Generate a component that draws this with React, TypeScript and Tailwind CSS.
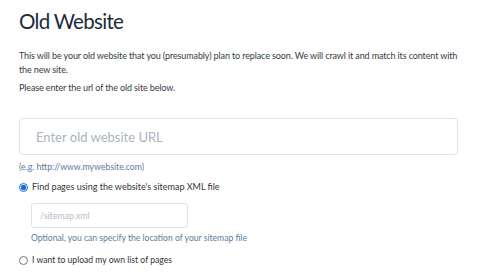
import React, { useState } from 'react';

const App: React.FC = () => {
  const [mode, setMode] = useState<'sitemap' | 'upload'>('sitemap');

  return (
    <div className="min-h-[280px] w-[480px] bg-white font-['Lato','Liberation_Sans',sans-serif] text-[#363b42]">
      <div className="pl-[19px] pr-[22px] pt-[7px]">
        <h1 className="text-[20.5px] font-normal leading-[28px] tracking-[-0.7px] text-[#1c2b3a]">Old Website</h1>

        <p className="mt-[14px] text-[9px] leading-[14px] tracking-[-0.12px]">
          This will be your old website that you (presumably) plan to replace soon. We will crawl it and match its content with the new site.
        </p>
        <p className="mt-[4px] text-[9px] leading-[14px] tracking-[-0.12px]">Please enter the url of the old site below.</p>

        <input
          type="text"
          placeholder="Enter old website URL"
          className="mt-[23px] block h-[37px] w-full rounded-[4px] border border-[#dbe3ec] px-[16px] text-[13px] text-[#333] outline-none placeholder:text-[#aab4bf]"
        />
        <div className="mt-[6px] text-[8.7px] leading-[12px] text-[#5b7d9c]">(e.g. http://www.mywebsite.com)</div>

        <label className="mt-[8px] flex items-center gap-[4px] text-[9px] leading-[12px] text-[#333]">
          <input
            type="radio"
            name="mode"
            checked={mode === 'sitemap'}
            onChange={() => setMode('sitemap')}
            className="m-0 h-[9px] w-[9px] accent-[#1a6fd6]"
          />
          Find pages using the website's sitemap XML file
        </label>

        <div className="pl-[12px]">
          <input
            type="text"
            placeholder="/sitemap.xml"
            className="mt-[10px] block h-[25px] w-[157px] rounded-[3px] border border-[#dbe3ec] px-[8px] text-[8.8px] text-[#333] outline-none placeholder:text-[#b5bec8]"
          />
          <div className="mt-[4px] text-[8.6px] leading-[12px] text-[#5b7d9c]">
            Optional, you can specify the location of your sitemap file
          </div>
        </div>

        <label className="mt-[10px] flex items-center gap-[4px] text-[8.6px] leading-[12px] text-[#333]">
          <input
            type="radio"
            name="mode"
            checked={mode === 'upload'}
            onChange={() => setMode('upload')}
            className="m-0 h-[9px] w-[9px] accent-[#1a6fd6]"
          />
          I want to upload my own list of pages
        </label>
      </div>
    </div>
  );
};

export default App;
